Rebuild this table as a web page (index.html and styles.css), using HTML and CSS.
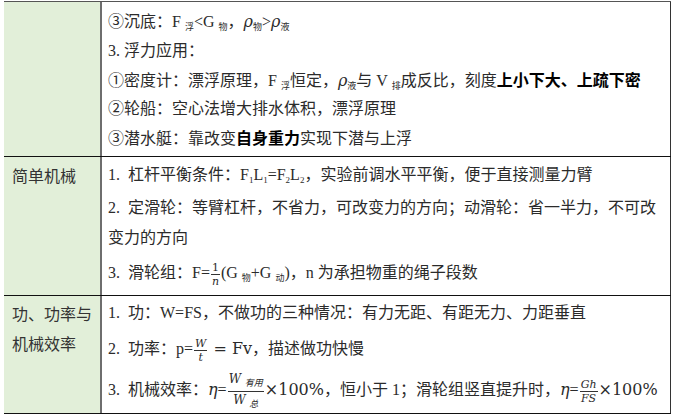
FILE: index.html
```html
<!DOCTYPE html>
<html lang="zh">
<head>
<meta charset="utf-8">
<link rel="stylesheet" href="styles.css">
</head>
<body>
<div class="table">
  <div class="row row-top">
    <div class="label"></div>
    <div class="content">
      <div class="p">③沉底：F <span class="sub">浮</span>&lt;G <span class="sub">物</span>，<i class="rho">ρ</i><span class="sub">物</span>&gt;<i class="rho">ρ</i><span class="sub">液</span></div>
      <div class="p">3. 浮力应用：</div>
      <div class="p">①密度计：漂浮原理，F <span class="sub">浮</span>恒定，<i class="rho">ρ</i><span class="sub">液</span>与 V <span class="sub">排</span>成反比，刻度<b>上小下大、上疏下密</b></div>
      <div class="p">②轮船：空心法增大排水体积，漂浮原理</div>
      <div class="p">③潜水艇：靠改变<b>自身重力</b>实现下潜与上浮</div>
    </div>
  </div>
  <div class="row row-mid">
    <div class="label">简单机械</div>
    <div class="content">
      <div class="p"><span class="num">1.</span>杠杆平衡条件：F<span class="sub">1</span>L<span class="sub">1</span>=F<span class="sub">2</span>L<span class="sub">2</span>，实验前调水平平衡，便于直接测量力臂</div>
      <div class="p gap"><span class="num">2.</span>定滑轮：等臂杠杆，不省力，可改变力的方向；动滑轮：省一半力，不可改<br>变力的方向</div>
      <div class="p gap2"><span class="num">3.</span>滑轮组：F=<span class="frac"><span class="nu">1</span><span class="de"><i>n</i></span></span>(G <span class="sub">物</span>+G <span class="sub">动</span>)，n 为承担物重的绳子段数</div>
    </div>
  </div>
  <div class="row row-bot">
    <div class="label">功、功率与<br>机械效率</div>
    <div class="content">
      <div class="p"><span class="num">1.</span>功：W=FS，不做功的三种情况：有力无距、有距无力、力距垂直</div>
      <div class="p gap3"><span class="num">2.</span>功率：p=<span class="frac"><span class="nu"><i>W</i></span><span class="de"><i>t</i></span></span><span class="math"> = Fv</span>，描述做功快慢</div>
      <div class="p gap4"><span class="num">3.</span>机械效率：<i class="eta">η</i>=<span class="frac tall"><span class="nu"><i>W</i> <i class="fsub">有用</i></span><span class="de"><i>W</i> <i class="fsub">总</i></span></span><span class="math">×100%</span>，恒小于 1；滑轮组竖直提升时，<i class="eta">η</i>=<span class="frac"><span class="nu"><i>Gh</i></span><span class="de"><i>FS</i></span></span><span class="math">×100%</span></div>
    </div>
  </div>
</div>
</body>
</html>
```

FILE: styles.css
```css
html, body {
  margin: 0;
  padding: 0;
  background: #ffffff;
}

.table {
  margin: 1px 0 0 4px;
  width: 667px;
  border-top: 1px solid #555;
  border-bottom: 1px solid #111;
  font-family: "Liberation Serif", "Noto Sans CJK SC", serif;
  font-size: 16px;
  color: #2b2b2b;
}

.row {
  display: flex;
}

.row + .row {
  border-top: 1px solid #111;
}

.label {
  width: 88px;
  flex: none;
  background: #e2efd9;
  border-right: 2px solid #6e6e6e;
  padding: 3px 0 0 8px;
  font-family: "Noto Sans CJK SC", sans-serif;
  line-height: 30px;
  color: #333;
}

.content {
  flex: 1;
  border-right: 1px solid #333;
  padding: 4px 4px 4px 6px;
}

.row-top .content {
  padding: 5px 4px 4px 6px;
}

.row-top .p {
  line-height: 29px;
  height: 29px;
}

.row-mid .content {
  padding: 3px 4px 6px 6px;
}

.row-bot .label {
  padding-top: 2px;
}

.row-bot .content {
  padding: 2px 4px 3px 6px;
}

.p {
  line-height: 30px;
  white-space: nowrap;
}

.gap {
  margin-top: 3px;
}

.gap2 {
  margin-top: 4px;
  height: 32px;
  line-height: 32px;
}

.gap3 {
  margin-top: 5px;
  height: 32px;
  line-height: 32px;
}

.gap4 {
  margin-top: 5px;
  height: 40px;
  line-height: 40px;
}

.num {
  display: inline-block;
  width: 20px;
}

b {
  font-family: "Noto Sans CJK SC", sans-serif;
  font-weight: 700;
  color: #000;
}

.sub {
  font-size: 9px;
  vertical-align: -3px;
  line-height: 1;
}

.rho, .eta {
  font-family: "DejaVu Serif", serif;
  font-style: italic;
  font-size: 16px;
}

.frac {
  display: inline-flex;
  flex-direction: column;
  align-items: center;
  vertical-align: middle;
  font-family: "DejaVu Serif", serif;
  font-size: 11px;
  line-height: 13px;
  margin: 0 1px;
}

.frac .nu {
  border-bottom: 1px solid #333;
  padding: 0 1px;
}

.frac.tall {
  font-size: 12px;
  line-height: 17px;
}

.fsub {
  font-family: "Noto Sans CJK SC", sans-serif;
  font-size: 9px;
  vertical-align: -3px;
}

.math {
  font-family: "DejaVu Serif", serif;
  font-size: 16px;
}
```
